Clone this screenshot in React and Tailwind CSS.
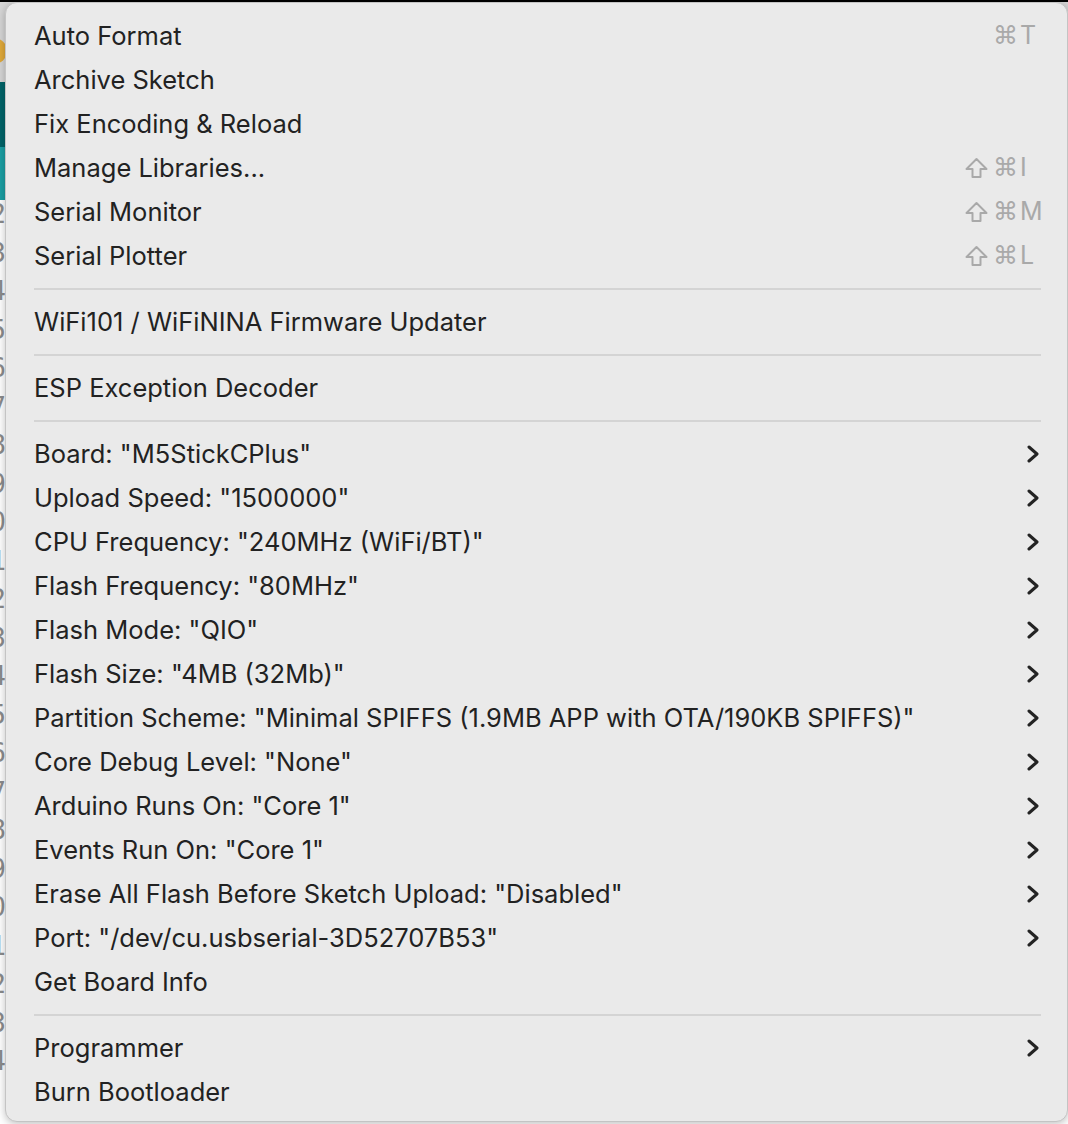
import React from "react";

const items = [
  { t: "Auto Format", sc: [false, "T"] },
  { t: "Archive Sketch" },
  { t: "Fix Encoding & Reload" },
  { t: "Manage Libraries...", sc: [true, "I"] },
  { t: "Serial Monitor", sc: [true, "M"] },
  { t: "Serial Plotter", sc: [true, "L"] },
  { sep: true },
  { t: "WiFi101 / WiFiNINA Firmware Updater" },
  { sep: true },
  { t: "ESP Exception Decoder" },
  { sep: true },
  { t: 'Board: "M5StickCPlus"', sub: true },
  { t: 'Upload Speed: "1500000"', sub: true },
  { t: 'CPU Frequency: "240MHz (WiFi/BT)"', sub: true },
  { t: 'Flash Frequency: "80MHz"', sub: true },
  { t: 'Flash Mode: "QIO"', sub: true },
  { t: 'Flash Size: "4MB (32Mb)"', sub: true },
  { t: 'Partition Scheme: "Minimal SPIFFS (1.9MB APP with OTA/190KB SPIFFS)"', sub: true },
  { t: 'Core Debug Level: "None"', sub: true },
  { t: 'Arduino Runs On: "Core 1"', sub: true },
  { t: 'Events Run On: "Core 1"', sub: true },
  { t: 'Erase All Flash Before Sketch Upload: "Disabled"', sub: true },
  { t: 'Port: "/dev/cu.usbserial-3D52707B53"', sub: true },
  { t: "Get Board Info" },
  { sep: true },
  { t: "Programmer", sub: true },
  { t: "Burn Bootloader" },
];

const lineNums = ["2","3","4","5","6","7","8","9","0","1","2","3","4","5","6","7","8","9","0","1","2","3","4"];

function Chevron() {
  return (
    <svg width="12" height="18" viewBox="0 0 12 18" className="ml-[62px]">
      <path d="M2 2 L10 9 L2 16" fill="none" stroke="#232323" strokeWidth="3" strokeLinecap="round" strokeLinejoin="round" />
    </svg>
  );
}

function Shift() {
  return (
    <svg width="23" height="22" viewBox="0 0 23 22">
      <path d="M11.5 2 L21.5 12 L15.5 12 L15.5 20 L7.5 20 L7.5 12 L1.5 12 Z" fill="none" stroke="#a9a9a9" strokeWidth="2" strokeLinejoin="round" />
    </svg>
  );
}

export default function App() {
  return (
    <div className="relative w-[1068px] h-[1124px] overflow-hidden bg-white">
      {/* background app */}
      <div className="flex flex-col h-full">
        <div className="h-[2px] bg-black" />
        <div className="h-[80px] bg-[#d5d5d5] flex flex-col">
          <div className="h-[36px]" />
          <div className="w-[26px] h-[26px] rounded-full bg-[#e0a93a] -ml-[19px]" />
        </div>
        <div className="h-[65px] bg-[#006468]" />
        <div className="h-[53px] bg-[#1a9fa3]" />
        <div className="flex-1 bg-white">
          <div className="-ml-[10px] w-[16px] text-right text-[26px] leading-[38.5px] text-[#8c8c8c] mt-[-5px]" style={{ fontFamily: '"DejaVu Sans Mono", monospace' }}>
            {lineNums.map((n, i) => (
              <div key={i}>{n}</div>
            ))}
          </div>
        </div>
      </div>

      {/* menu */}
      <div
        className="absolute left-[5px] top-[2px] w-[1063px] h-[1120px] rounded-[12px] bg-[#eaeaea] border border-[#c4c4c4] shadow-[0_2px_8px_rgba(0,0,0,0.25)] pt-[11px] pb-[8px] text-[#222222]"
        style={{ fontFamily: 'Inter, "Noto Sans", sans-serif' }}
      >
        {items.map((it, i) =>
          it.sep ? (
            <div key={i} className="h-[22px] flex items-center pl-[28px] pr-[26px]">
              <div className="h-[2px] w-full bg-[#d4d4d4]" />
            </div>
          ) : (
            <div key={i} className="h-[44px] flex items-center pl-[28px] pr-[22px]">
              <div className="flex-1 text-[25.5px] whitespace-nowrap">{it.t}</div>
              <div className="w-[80px] flex items-center text-[25px] text-[#a9a9a9]">
                {it.sc ? (
                  <>
                    <span className="w-[28px] flex items-center">{it.sc[0] ? <Shift /> : null}</span>
                    <span className="w-[27px] text-[25px]" style={{ fontFamily: '"DejaVu Sans", sans-serif' }}>⌘</span>
                    <span>{it.sc[1]}</span>
                  </>
                ) : it.sub ? (
                  <Chevron />
                ) : null}
              </div>
            </div>
          )
        )}
      </div>
    </div>
  );
}
